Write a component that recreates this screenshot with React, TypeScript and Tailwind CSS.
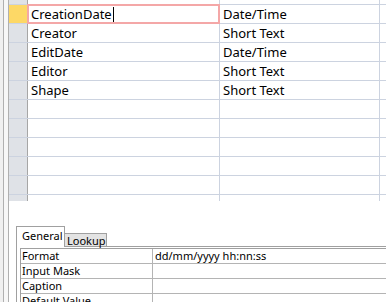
const rows = [
  { name: "CreationDate", type: "Date/Time", active: true },
  { name: "Creator", type: "Short Text" },
  { name: "EditDate", type: "Date/Time" },
  { name: "Editor", type: "Short Text" },
  { name: "Shape", type: "Short Text" },
  { name: "", type: "" },
  { name: "", type: "" },
  { name: "", type: "" },
  { name: "", type: "" },
  { name: "", type: "" },
];

const props = ["Format", "Input Mask", "Caption", "Default Value"];

const GridRow: React.FC<{ name: string; type: string; active?: boolean }> = ({ name, type, active }) => {
  return (
    <div className="flex h-[19px] border-b border-[#ccd3e0]">
      <div className={`w-[19px] shrink-0 border-r border-[#a6a6a6] ${active ? "bg-[#fdd866]" : "bg-[#dfe2e7]"}`} />
      <div className="relative w-[192px] shrink-0 border-r border-[#ccd3e0] pl-[3px] leading-[18px]">
        {name}
        {active && <span className="inline-block ml-px w-px h-[15px] bg-black align-[-3px]" />}
        {active && <div className="absolute -left-px -top-px w-[193px] h-[20px] border-2 border-[#f4a7a7]" />}
      </div>
      <div className="w-[160px] shrink-0 border-r border-[#ccd3e0] pl-[3px] leading-[18px]">{type}</div>
      <div className="flex-1" />
    </div>
  );
};

const App: React.FC = () => {
  return (
    <div className="flex w-[386px] h-[302px] overflow-hidden bg-white text-black">
      {/* left edge strip */}
      <div className="w-[3px] shrink-0 bg-[#f0f0f0]" />
      <div className="w-[6px] shrink-0 border-l border-r border-[#b0b0b0] bg-[#f7f7f7]" />

      <div className="flex-1 flex flex-col min-w-0">
        {/* field grid */}
        <div className="text-[13px] font-['Noto_Sans',sans-serif]">
          <div className="flex h-[5px] border-b border-[#ccd3e0]">
            <div className="w-[19px] shrink-0 border-r border-[#a6a6a6] bg-[#dfe2e7]" />
            <div className="w-[192px] shrink-0 border-r border-[#ccd3e0]" />
            <div className="w-[160px] shrink-0 border-r border-[#ccd3e0]" />
          </div>
          {rows.map((r, i) => (
            <GridRow key={i} name={r.name} type={r.type} active={r.active} />
          ))}
          <div className="flex h-[6px]">
            <div className="w-[19px] shrink-0 border-r border-[#a6a6a6] bg-[#dfe2e7]" />
            <div className="w-[192px] shrink-0 border-r border-[#ccd3e0]" />
            <div className="w-[160px] shrink-0 border-r border-[#ccd3e0]" />
          </div>
        </div>

        {/* field properties */}
        <div className="mt-[25px] text-[11px] font-['Noto_Sans',sans-serif]">
          <div className="flex items-end h-[21px] pl-[7px]">
            <div className="w-[49px] h-[21px] border border-b-0 border-[#a0a0a0] bg-white pl-[5px] leading-[15px] pt-[1px]">
              General
            </div>
            <div className="w-[42px] h-[14px] border-t border-r border-b border-[#a0a0a0] bg-[#e3e3e3] pl-[2px] leading-[14px]">
              Lookup
            </div>
            <div className="flex-1 border-b border-[#a0a0a0]" />
          </div>
          <div className="ml-[7px] border-l border-[#a0a0a0] pl-[3px] pt-px">
            <div className="border-l border-t border-[#a0a0a0]">
              {props.map((p, i) => (
                <div key={i} className="flex h-[15px] border-b border-[#b4b4b4]">
                  <div className="w-[132px] shrink-0 border-r border-[#b4b4b4] pl-[1px] leading-[14px]">{p}</div>
                  <div className="flex-1 pl-[2px] leading-[14px]">{i === 0 ? "dd/mm/yyyy hh:nn:ss" : ""}</div>
                </div>
              ))}
            </div>
          </div>
        </div>
      </div>
    </div>
  );
};

export default App;
